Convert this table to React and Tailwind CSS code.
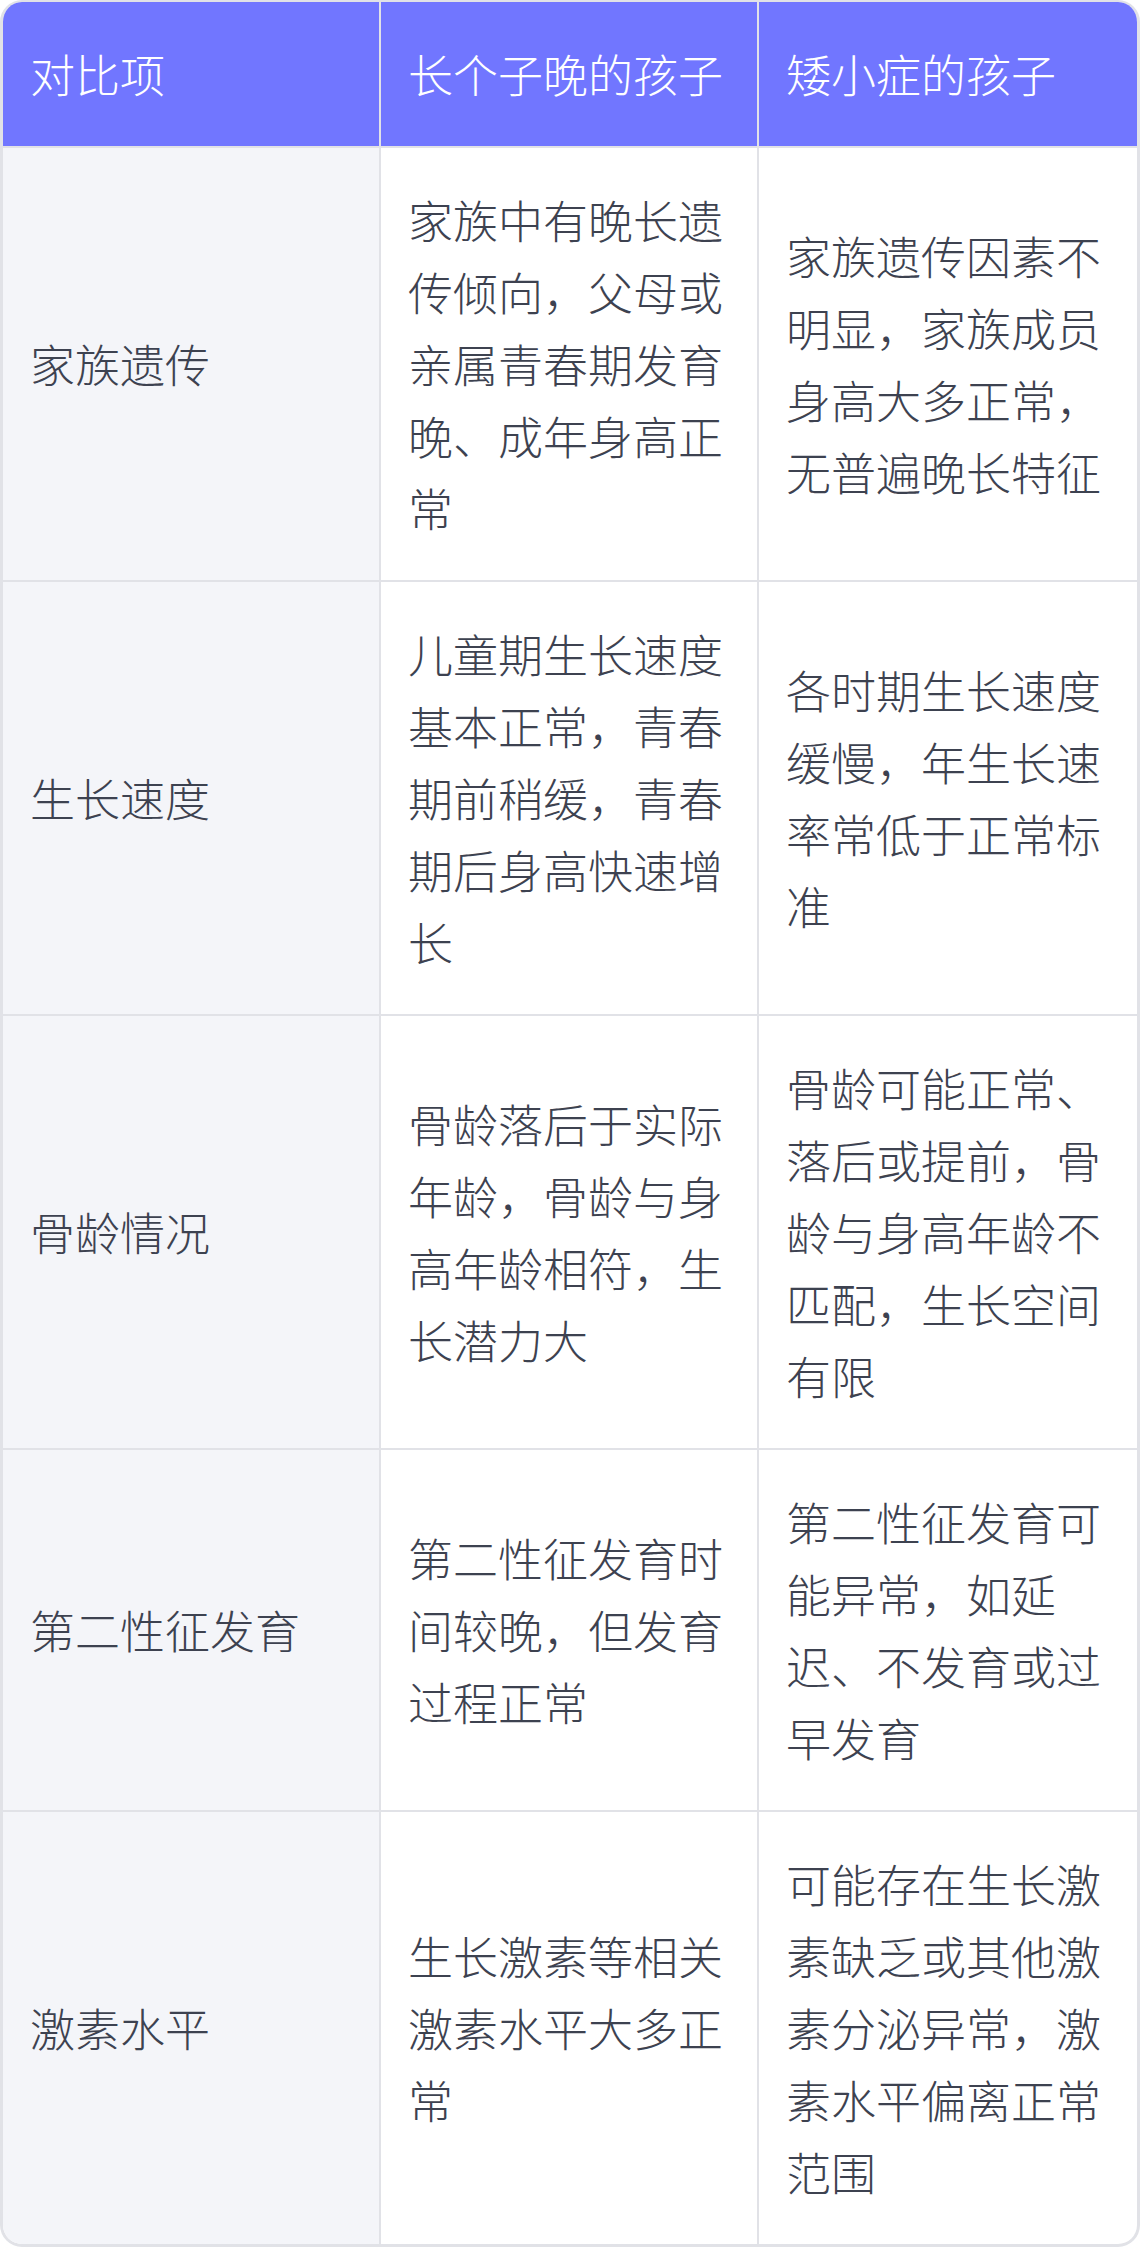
const rows = [
  {
    item: '家族遗传',
    late: '家族中有晚长遗传倾向，父母或亲属青春期发育晚、成年身高正常',
    short: '家族遗传因素不明显，家族成员身高大多正常，无普遍晚长特征',
  },
  {
    item: '生长速度',
    late: '儿童期生长速度基本正常，青春期前稍缓，青春期后身高快速增长',
    short: '各时期生长速度缓慢，年生长速率常低于正常标准',
  },
  {
    item: '骨龄情况',
    late: '骨龄落后于实际年龄，骨龄与身高年龄相符，生长潜力大',
    short: '骨龄可能正常、落后或提前，骨龄与身高年龄不匹配，生长空间有限',
  },
  {
    item: '第二性征发育',
    late: '第二性征发育时间较晚，但发育过程正常',
    short: '第二性征发育可能异常，如延迟、不发育或过早发育',
  },
  {
    item: '激素水平',
    late: '生长激素等相关激素水平大多正常',
    short: '可能存在生长激素缺乏或其他激素分泌异常，激素水平偏离正常范围',
  },
];

function Cell({ children, className = '' }) {
  return (
    <div className={`flex items-center px-[27px] py-[36px] ${className}`}>
      <span className="block w-full">{children}</span>
    </div>
  );
}

export default function App() {
  return (
    <div
      className="w-[1140px] bg-white"
      style={{ fontFamily: '"Noto Sans CJK SC", "Noto Sans", sans-serif' }}
    >
      <div className="overflow-hidden rounded-[22px] border-[3px] border-t-2 border-[#e1e2e7] text-[45px] font-light leading-[72px] text-[#3d4250]">
        <div className="grid grid-cols-3 bg-[#7176ff] text-white border-b-2 border-[#e1e2e7]">
          <Cell className="border-r-2 border-[#e1e2e7]">对比项</Cell>
          <Cell className="border-r-2 border-[#e1e2e7]">长个子晚的孩子</Cell>
          <Cell>矮小症的孩子</Cell>
        </div>
        {rows.map((r, i) => (
          <div
            key={r.item}
            className={`grid grid-cols-3 ${i < rows.length - 1 ? 'border-b-2 border-[#e1e2e7]' : ''}`}
          >
            <Cell className="bg-[#f4f5f9] border-r-2 border-[#e1e2e7]">{r.item}</Cell>
            <Cell className="border-r-2 border-[#e1e2e7]">{r.late}</Cell>
            <Cell>{r.short}</Cell>
          </div>
        ))}
      </div>
    </div>
  );
}
